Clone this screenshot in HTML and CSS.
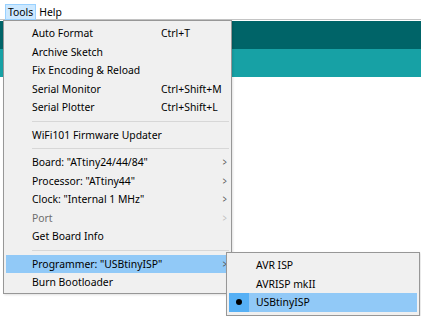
FILE: index.html
```html
<!DOCTYPE html>
<html lang="en">
<head>
    <meta charset="UTF-8">
    <title>Arduino - Tools</title>
    <link rel="stylesheet" href="styles.css">
</head>
<body>

<!-- menu bar -->
<div class="menubar">
    <span class="menubar-item open">Tools</span>
    <span class="menubar-item">Help</span>
</div>

<!-- editor behind the menus -->
<div class="editor">
    <div class="toolbar"></div>
    <div class="tabs"></div>
    <div class="code"></div>
</div>

<!-- Tools menu -->
<div class="menu">
    <div class="item"><span class="label">Auto Format</span><span class="key">Ctrl+T</span></div>
    <div class="item"><span class="label">Archive Sketch</span></div>
    <div class="item"><span class="label">Fix Encoding &amp; Reload</span></div>
    <div class="item"><span class="label">Serial Monitor</span><span class="key">Ctrl+Shift+M</span></div>
    <div class="item"><span class="label">Serial Plotter</span><span class="key">Ctrl+Shift+L</span></div>
    <div class="sep"></div>
    <div class="item"><span class="label">WiFi101 Firmware Updater</span></div>
    <div class="sep"></div>
    <div class="item sub"><span class="label">Board: "ATtiny24/44/84"</span><span class="arrow">&gt;</span></div>
    <div class="item sub"><span class="label">Processor: "ATtiny44"</span><span class="arrow">&gt;</span></div>
    <div class="item sub"><span class="label">Clock: "Internal 1 MHz"</span><span class="arrow">&gt;</span></div>
    <div class="item sub disabled"><span class="label">Port</span><span class="arrow">&gt;</span></div>
    <div class="item"><span class="label">Get Board Info</span></div>
    <div class="sep"></div>
    <div class="item sub active"><span class="label">Programmer: "USBtinyISP"</span><span class="arrow">&gt;</span></div>
    <div class="item"><span class="label">Burn Bootloader</span></div>
</div>

<!-- Programmer submenu -->
<div class="submenu">
    <div class="item"><span class="check"></span><span class="label">AVR ISP</span></div>
    <div class="item"><span class="check"></span><span class="label">AVRISP mkII</span></div>
    <div class="item active"><span class="check"><span class="dot"></span></span><span class="label">USBtinyISP</span></div>
</div>

</body>
</html>
```

FILE: styles.css
```css
body {
    margin: 0;
    background: #ffffff;
    color: #000000;
    font-family: "Noto Sans", "Open Sans", Arial, sans-serif;
    font-size: 10.4px;
    overflow: hidden;
}

/* Menu bar */
.menubar {
    display: flex;
    height: 20px;
    padding-left: 5px;
    box-sizing: border-box;
    border-bottom: 1px solid #c4c4c4;
    background: #ffffff;
}

.menubar-item {
    height: 16px;
    margin-top: 4px;
    padding: 0 2px;
    line-height: 14px;
    border: 1px solid transparent;
    box-sizing: border-box;
}

.menubar-item.open {
    background: #cce8ff;
    border-color: #99d1ff;
}

/* Editor under the menu */
.editor {
    padding-top: 1px;
}

.toolbar {
    height: 28px;
    background: #006468;
}

.tabs {
    height: 28px;
    background: #17a1a5;
}

.code {
    height: 240px;
    background: #ffffff;
}

/* Popup menus */
.menu, .submenu {
    position: absolute;
    background: #f0f0f0;
    border: 1px solid #979797;
    box-shadow: 1px 1px 2px rgba(0, 0, 0, 0.12);
    padding: 3px 2px 1px;
}

.menu {
    left: 3px;
    top: 20px;
    width: 223px;
    height: 268px;
}

.submenu {
    left: 226px;
    top: 252px;
    width: 188px;
    height: 58px;
}

.item {
    display: flex;
    align-items: center;
    height: 18.5px;
    padding-left: 26px;
    white-space: nowrap;
}

.menu .label {
    width: 129px;
}

.key {
    flex: 1;
}

.arrow {
    margin-left: auto;
    margin-right: 1px;
    color: #4d4d4d;
    font-size: 10px;
    transform: scaleX(0.7);
}

.item.active {
    background: #91c9f7;
}

.item.disabled {
    color: #6d6d6d;
}

.item.disabled .arrow {
    color: #bcbcbc;
}

.sep {
    height: 1px;
    margin: 4px 0 4px 26px;
    background: #d7d7d7;
}

/* Submenu check column */
.submenu .item {
    padding-left: 0;
}

.check {
    width: 20px;
    height: 100%;
    margin-right: 7px;
    display: flex;
    align-items: center;
    justify-content: center;
}

.item.active .check {
    background: #56b0f5;
}

.dot {
    width: 6px;
    height: 6px;
    border-radius: 50%;
    background: #000000;
}
```
